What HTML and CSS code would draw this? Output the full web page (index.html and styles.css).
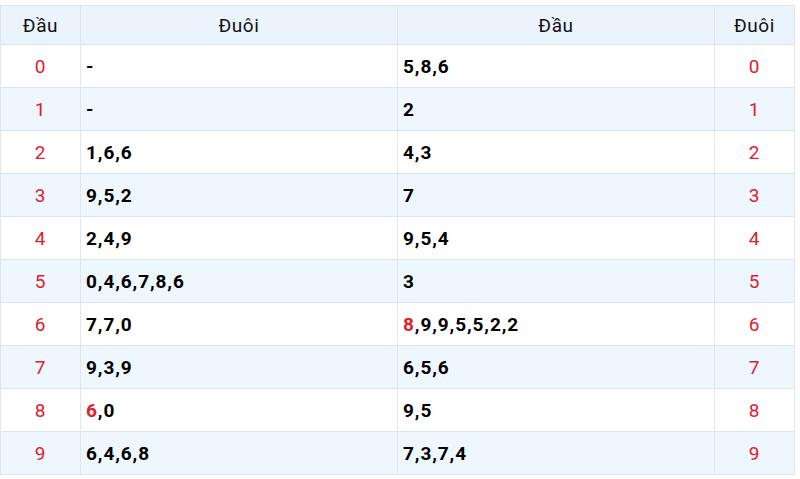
FILE: index.html
```html
<!DOCTYPE html>
<html>
<head>
<meta charset="utf-8">
<link rel="stylesheet" href="styles.css">
</head>
<body>
<table class="lt">
  <colgroup>
    <col class="c-num"><col class="c-val"><col class="c-val"><col class="c-num2">
  </colgroup>
  <thead>
    <tr><th>Đầu</th><th>Đuôi</th><th>Đầu</th><th>Đuôi</th></tr>
  </thead>
  <tbody>
    <tr><td class="n">0</td><td class="v">-</td><td class="v">5,8,6</td><td class="n">0</td></tr>
    <tr><td class="n">1</td><td class="v">-</td><td class="v">2</td><td class="n">1</td></tr>
    <tr><td class="n">2</td><td class="v">1,6,6</td><td class="v">4,3</td><td class="n">2</td></tr>
    <tr><td class="n">3</td><td class="v">9,5,2</td><td class="v">7</td><td class="n">3</td></tr>
    <tr><td class="n">4</td><td class="v">2,4,9</td><td class="v">9,5,4</td><td class="n">4</td></tr>
    <tr><td class="n">5</td><td class="v">0,4,6,7,8,6</td><td class="v">3</td><td class="n">5</td></tr>
    <tr><td class="n">6</td><td class="v">7,7,0</td><td class="v"><span class="hl">8</span>,9,9,5,5,2,2</td><td class="n">6</td></tr>
    <tr><td class="n">7</td><td class="v">9,3,9</td><td class="v">6,5,6</td><td class="n">7</td></tr>
    <tr><td class="n">8</td><td class="v"><span class="hl">6</span>,0</td><td class="v">9,5</td><td class="n">8</td></tr>
    <tr><td class="n">9</td><td class="v">6,4,6,8</td><td class="v">7,3,7,4</td><td class="n">9</td></tr>
  </tbody>
</table>
</body>
</html>
```
FILE: styles.css
```css
html, body {
  margin: 0;
  padding: 0;
  background: #fff;
}
body {
  padding-top: 5px;
  font-family: Roboto, "Liberation Sans", sans-serif;
}
.lt {
  width: 794px;
  border-collapse: collapse;
  table-layout: fixed;
  font-size: 19px;
  letter-spacing: 0.9px;
}
.c-num { width: 80px; }
.c-val { width: 317px; }
.c-num2 { width: 80px; }
.lt th, .lt td {
  border: 1px solid #dfe5ec;
  padding: 0 5px;
}
.lt th {
  height: 38px;
  background: #ebf4fd;
  font-weight: 400;
  color: #111;
  text-align: center;
  letter-spacing: 0.6px;
}
.lt td {
  height: 42px;
}
.lt tbody tr:nth-child(even) td {
  background: #eef6fe;
}
.n {
  text-align: center;
  color: #e0202c;
}
.v {
  font-weight: 700;
  color: #000;
}
.hl {
  color: #e0202c;
}
```
